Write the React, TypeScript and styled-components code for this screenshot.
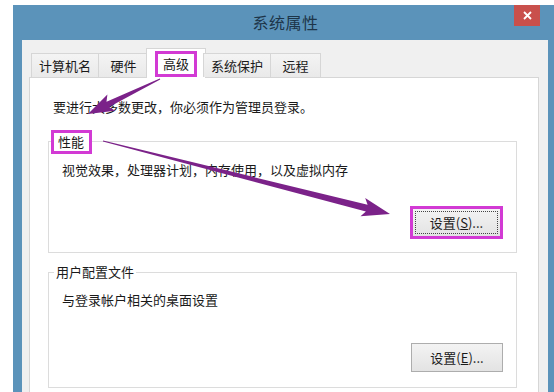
import React from 'react';
import styled, { createGlobalStyle, css } from 'styled-components';

const GlobalStyle = createGlobalStyle`
  html, body {
    margin: 0;
    background: #ffffff;
    overflow: hidden;
  }
  body {
    font-family: "Noto Sans CJK SC", "Noto Sans", sans-serif;
  }
`;

const MAGENTA = '#d23ad4';
const PURPLE = '#7b2289';

type Pt = [number, number];

// tapered arrow as a polygon: thin tail, wider neck, barbed head
const arrowPoints = (
  tail: Pt,
  tip: Pt,
  tailW: number,
  neckW: number,
  headLen: number,
  headW: number
) => {
  const dx = tip[0] - tail[0];
  const dy = tip[1] - tail[1];
  const len = Math.hypot(dx, dy);
  const ux = dx / len;
  const uy = dy / len;
  const nx = -uy;
  const ny = ux;
  const neck: Pt = [tip[0] - ux * headLen, tip[1] - uy * headLen];
  const barb: Pt = [neck[0] - ux * 4, neck[1] - uy * 4];
  const p = (b: Pt, w: number): string =>
    `${(b[0] + nx * w).toFixed(1)},${(b[1] + ny * w).toFixed(1)}`;
  return [
    p(tail, tailW / 2),
    p(neck, neckW / 2),
    p(barb, headW / 2),
    `${tip[0]},${tip[1]}`,
    p(barb, -headW / 2),
    p(neck, -neckW / 2),
    p(tail, -tailW / 2)
  ].join(' ');
};

const Page = styled.div`
  position: relative;
  width: 554px;
  height: 392px;
  overflow: hidden;
  padding: 5px 0 0 13px;
  box-sizing: border-box;
  background: #ffffff;
`;

const Window = styled.div`
  width: 545px;
  height: 400px;
  background: #5b93ba;
  display: flex;
  flex-direction: column;
`;

const TitleBar = styled.div`
  height: 35px;
  display: grid;
  grid-template-columns: 1fr auto 1fr;
  align-items: start;
  padding-right: 18px;
`;

const Title = styled.div`
  grid-column: 2;
  margin: 7px 0 0 18px;
  font-size: 16px;
  line-height: 20px;
  color: #1d3549;
  letter-spacing: 0.5px;
`;

const CloseButton = styled.div`
  grid-column: 3;
  justify-self: end;
  width: 26px;
  height: 21px;
  background: #c9504c;
  display: flex;
  align-items: center;
  justify-content: center;
`;

const Body = styled.div`
  flex: 1;
  margin: 0 10px 0 9px;
  background: #f0f0f0;
  padding: 8px 9px 0 7px;
  display: flex;
  flex-direction: column;
`;

const TabStrip = styled.div`
  display: flex;
  align-items: flex-end;
  height: 29px;
  padding-left: 3px;
  position: relative;
  z-index: 1;
`;

const Tab = styled.div<{ $active?: boolean }>`
  box-sizing: border-box;
  height: 24px;
  min-width: 51px;
  padding: 0 7px;
  margin-left: -1px;
  border: 1px solid #d6d6d6;
  border-bottom: none;
  background: linear-gradient(#f4f4f4, #e9e9e9);
  font-size: 13px;
  color: #1a1a1a;
  display: flex;
  align-items: center;
  justify-content: center;
  ${(p) =>
    p.$active &&
    css`
      height: 30px;
      margin: 0 -2px -1px -3px;
      padding: 2px 8px 0;
      background: #ffffff;
      align-items: stretch;
    `}
`;

const TabLabel = styled.span<{ $marked?: boolean }>`
  display: flex;
  align-items: center;
  line-height: 16px;
  ${(p) =>
    p.$marked &&
    css`
      border: 3px solid ${MAGENTA};
      padding: 0 5px;
      margin-bottom: 1px;
    `}
`;

const TabPanel = styled.div`
  flex: 1;
  background: #ffffff;
  border: 1px solid #d6d6d6;
  padding: 21px 21px 0 18px;
  display: flex;
  flex-direction: column;
`;

const Notice = styled.div`
  font-size: 13px;
  line-height: 16px;
  color: #1a1a1a;
  margin-left: 5px;
`;

const GroupBox = styled.div<{ $height: number; $gap: number }>`
  box-sizing: border-box;
  height: ${(p) => p.$height}px;
  margin-top: ${(p) => p.$gap}px;
  border: 1px solid #dcdcdc;
  padding: 0 13px 15px 14px;
  display: flex;
  flex-direction: column;
`;

const Legend = styled.div<{ $marked?: boolean }>`
  align-self: flex-start;
  background: #ffffff;
  font-size: 13px;
  line-height: 16px;
  color: #1a1a1a;
  padding: 0 2px;
  margin: -9px 0 0 -9px;
  ${(p) =>
    p.$marked &&
    css`
      border: 3px solid ${MAGENTA};
      padding: 1px 5px 1px 4px;
      margin: -12px 0 -4px -12px;
    `}
`;

const Description = styled.div`
  margin: 12px 0 0 -1px;
  font-size: 13px;
  line-height: 16px;
  color: #1a1a1a;
`;

const Button = styled.div<{ $marked?: boolean }>`
  position: relative;
  box-sizing: border-box;
  align-self: flex-end;
  margin-top: auto;
  width: 92px;
  height: 29px;
  border: 1px solid #adadad;
  background: linear-gradient(#f3f3f3, #e3e3e3);
  font-size: 13px;
  color: #1a1a1a;
  display: flex;
  align-items: center;
  justify-content: center;
  ${(p) =>
    p.$marked &&
    css`
      width: 93px;
      height: 33px;
      margin-bottom: -2px;
      border: 3px solid ${MAGENTA};
      &::after {
        content: '';
        position: absolute;
        inset: 2px;
        border: 1px dotted #444;
      }
    `}
`;

const Underline = styled.span`
  text-decoration: underline;
`;

const Overlay = styled.svg`
  position: absolute;
  left: 0;
  top: 0;
  pointer-events: none;
`;

export default function App() {
  return (
    <>
      <GlobalStyle />
      <Page>
        <Window>
          <TitleBar>
            <Title>系统属性</Title>
            <CloseButton>
              <svg width="9" height="9" viewBox="0 0 9 9">
                <path d="M1 1 L8 8 M8 1 L1 8" stroke="#fff" strokeWidth="1.8" />
              </svg>
            </CloseButton>
          </TitleBar>
          <Body>
            <TabStrip>
              <Tab>计算机名</Tab>
              <Tab>硬件</Tab>
              <Tab $active>
                <TabLabel $marked>高级</TabLabel>
              </Tab>
              <Tab>系统保护</Tab>
              <Tab>远程</Tab>
            </TabStrip>
            <TabPanel>
              <Notice>要进行大多数更改，你必须作为管理员登录。</Notice>
              <GroupBox $height={112} $gap={26}>
                <Legend $marked>性能</Legend>
                <Description>视觉效果，处理器计划，内存使用，以及虚拟内存</Description>
                <Button $marked>
                  设置(<Underline>S</Underline>)...
                </Button>
              </GroupBox>
              <GroupBox $height={116} $gap={19}>
                <Legend>用户配置文件</Legend>
                <Description>与登录帐户相关的桌面设置</Description>
                <Button>
                  设置(<Underline>E</Underline>)...
                </Button>
              </GroupBox>
            </TabPanel>
          </Body>
        </Window>
        <Overlay width="554" height="392" viewBox="0 0 554 392">
          <polygon points={arrowPoints([160, 79], [88, 114], 1, 6, 22, 18)} fill={PURPLE} />
          <polygon points={arrowPoints([103, 141], [390, 214], 1, 7, 24, 19)} fill={PURPLE} />
        </Overlay>
      </Page>
    </>
  );
}
